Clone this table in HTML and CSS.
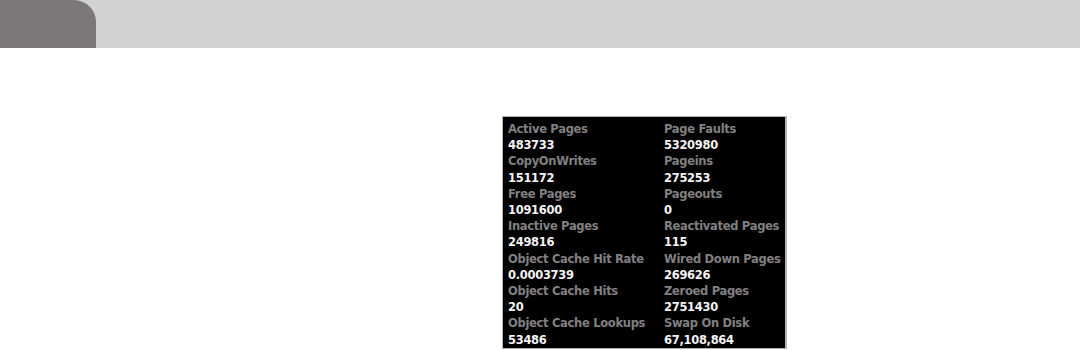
FILE: index.html
```html
<!DOCTYPE html>
<html>
<head>
<meta charset="utf-8">
<link rel="stylesheet" href="styles.css">
</head>
<body>
<header class="topbar">
  <div class="tab"></div>
</header>
<main class="stage">
  <section class="stats">
    <div class="col">
      <div class="item"><div class="label">Active Pages</div><div class="value">483733</div></div>
      <div class="item"><div class="label">CopyOnWrites</div><div class="value">151172</div></div>
      <div class="item"><div class="label">Free Pages</div><div class="value">1091600</div></div>
      <div class="item"><div class="label">Inactive Pages</div><div class="value">249816</div></div>
      <div class="item"><div class="label">Object Cache Hit Rate</div><div class="value">0.0003739</div></div>
      <div class="item"><div class="label">Object Cache Hits</div><div class="value">20</div></div>
      <div class="item"><div class="label">Object Cache Lookups</div><div class="value">53486</div></div>
    </div>
    <div class="col">
      <div class="item"><div class="label">Page Faults</div><div class="value">5320980</div></div>
      <div class="item"><div class="label">Pageins</div><div class="value">275253</div></div>
      <div class="item"><div class="label">Pageouts</div><div class="value">0</div></div>
      <div class="item"><div class="label">Reactivated Pages</div><div class="value">115</div></div>
      <div class="item"><div class="label">Wired Down Pages</div><div class="value">269626</div></div>
      <div class="item"><div class="label">Zeroed Pages</div><div class="value">2751430</div></div>
      <div class="item"><div class="label">Swap On Disk</div><div class="value">67,108,864</div></div>
    </div>
  </section>
</main>
</body>
</html>
```
FILE: styles.css
```css
html, body {
  margin: 0;
  padding: 0;
  background: #ffffff;
}
body {
  width: 1080px;
  height: 350px;
  overflow: hidden;
}
.topbar {
  height: 48px;
  background: #d3d3d3;
  display: flex;
}
.tab {
  width: 96px;
  height: 48px;
  background: #7b7879;
  border-top-right-radius: 22px;
}
.stage {
  padding: 68px 0 0 502px;
}
.stats {
  width: 277px;
  height: 227px;
  background: #000;
  border: 1px solid #b4b4b4;
  border-right-width: 2px;
  display: grid;
  grid-template-columns: 156px 1fr;
  padding: 4px 0 0 5px;
  box-sizing: content-box;
  font-family: "DejaVu Sans", sans-serif;
  font-weight: bold;
  font-size: 11.5px;
  letter-spacing: -0.3px;
  line-height: 16.2px;
}
.col {
  display: flex;
  flex-direction: column;
}
.label {
  color: #808080;
}
.value {
  color: #f4f4f4;
}
```
